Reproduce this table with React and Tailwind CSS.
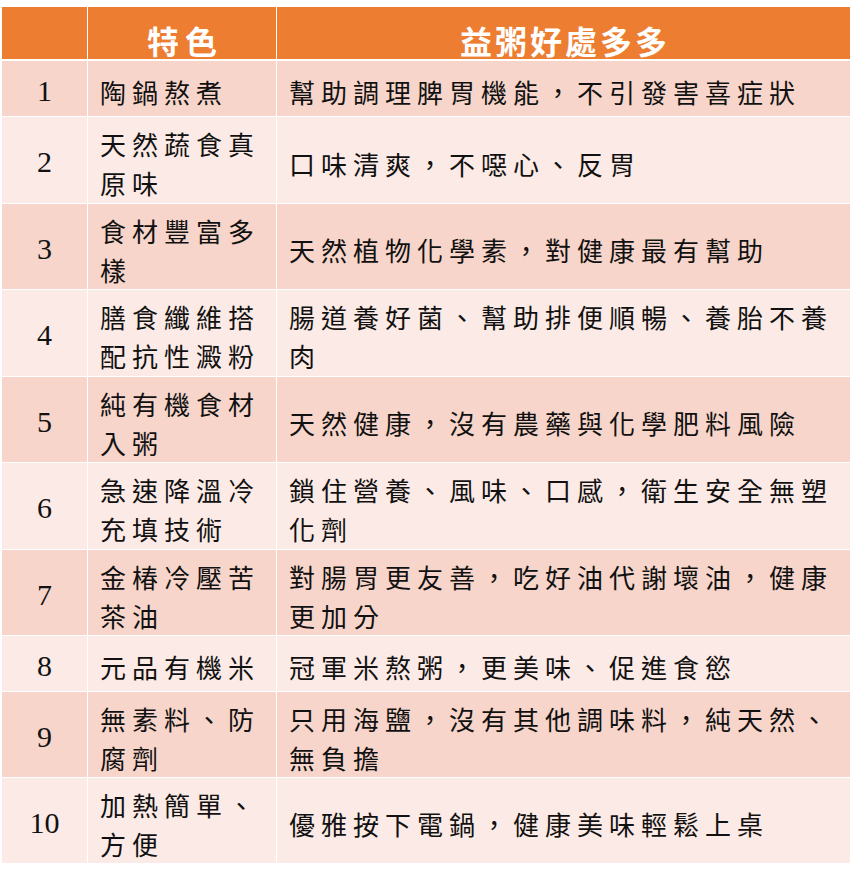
import React from "react";

const rows = [
  { n: "1", a: ["陶鍋熬煮"], b: ["幫助調理脾胃機能，不引發害喜症狀"], h: "h-[55px]" },
  { n: "2", a: ["天然蔬食真", "原味"], b: ["口味清爽，不噁心、反胃"], h: "h-[86px]" },
  { n: "3", a: ["食材豐富多", "樣"], b: ["天然植物化學素，對健康最有幫助"], h: "h-[85px]" },
  { n: "4", a: ["膳食纖維搭", "配抗性澱粉"], b: ["腸道養好菌、幫助排便順暢、養胎不養", "肉"], h: "h-[86px]" },
  { n: "5", a: ["純有機食材", "入粥"], b: ["天然健康，沒有農藥與化學肥料風險"], h: "h-[85px]" },
  { n: "6", a: ["急速降溫冷", "充填技術"], b: ["鎖住營養、風味、口感，衛生安全無塑", "化劑"], h: "h-[86px]" },
  { n: "7", a: ["金椿冷壓苦", "茶油"], b: ["對腸胃更友善，吃好油代謝壞油，健康", "更加分"], h: "h-[85px]" },
  { n: "8", a: ["元品有機米"], b: ["冠軍米熬粥，更美味、促進食慾"], h: "h-[55px]" },
  { n: "9", a: ["無素料、防", "腐劑"], b: ["只用海鹽，沒有其他調味料，純天然、", "無負擔"], h: "h-[85px]" },
  { n: "10", a: ["加熱簡單、", "方便"], b: ["優雅按下電鍋，健康美味輕鬆上桌"], h: "h-[85px]" },
];

const cjk = { fontFamily: '"Noto Sans CJK TC", "Noto Sans CJK SC", sans-serif' };
const serif = { fontFamily: '"Liberation Serif", "Noto Sans CJK TC", serif' };

function Lines({ lines }) {
  return (
    <div className="flex flex-col">
      {lines.map((l, i) => (
        <span key={i} className="block whitespace-nowrap">
          {l}
        </span>
      ))}
    </div>
  );
}

export default function App() {
  return (
    <div className="w-[854px] h-[878px] bg-white pt-[7px] pl-[2px]">
      <div className="w-[848px] flex flex-col gap-y-[1px]">
        <div className="grid grid-cols-[85px_188px_573px] gap-x-[1px] h-[52px] mb-[1px]">
          <div className="bg-[#ED7D31]" />
          <div
            className="bg-[#ED7D31] flex items-center justify-center pt-[13px] pl-[6px] text-white font-bold text-[32px] leading-[32px] tracking-[6px]"
            style={cjk}
          >
            特色
          </div>
          <div
            className="bg-[#ED7D31] flex items-center justify-center pt-[13px] pl-[3px] text-white font-bold text-[32px] leading-[32px] tracking-[3px]"
            style={cjk}
          >
            益粥好處多多
          </div>
        </div>
        {rows.map((r, i) => {
          const bg = i % 2 === 0 ? "bg-[#F7D5CA]" : "bg-[#FBEAE5]";
          return (
            <div
              key={r.n}
              className={`grid grid-cols-[85px_188px_573px] gap-x-[1px] ${r.h}`}
            >
              <div
                className={`${bg} flex items-center justify-center pt-[4px] text-[30px] leading-[30px] text-[#111]`}
                style={serif}
              >
                {r.n}
              </div>
              <div
                className={`${bg} flex items-center pl-[12px] pt-[6px] text-[26px] leading-[39px] tracking-[6px] text-[#111]`}
                style={cjk}
              >
                <Lines lines={r.a} />
              </div>
              <div
                className={`${bg} flex items-center pl-[12px] pt-[6px] text-[26px] leading-[39px] tracking-[6px] text-[#111]`}
                style={cjk}
              >
                <Lines lines={r.b} />
              </div>
            </div>
          );
        })}
      </div>
    </div>
  );
}
